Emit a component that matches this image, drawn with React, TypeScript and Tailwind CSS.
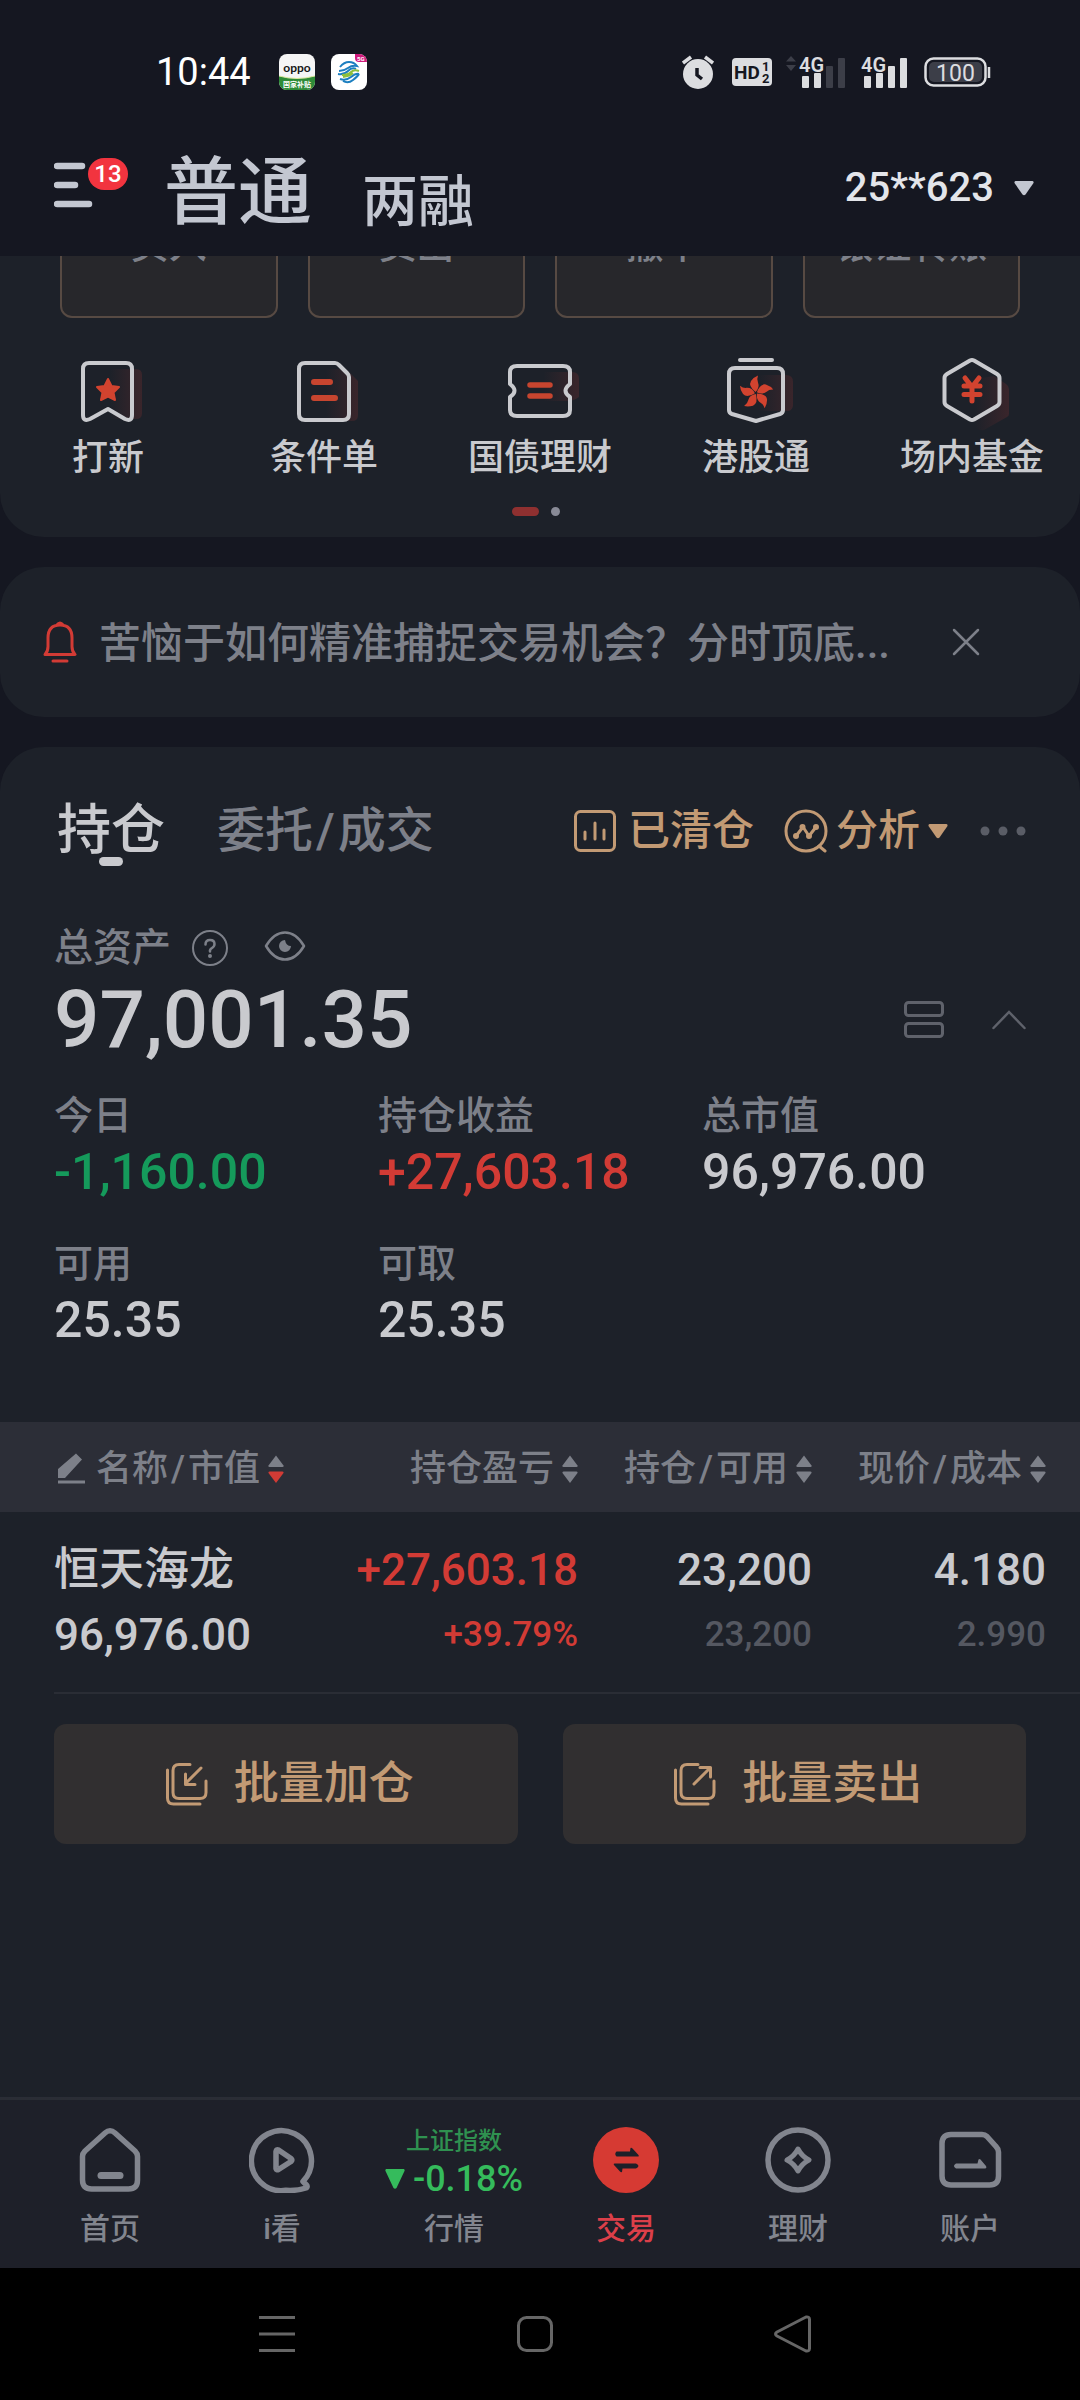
import type { ReactNode } from 'react'

const actions = ['买入', '卖出', '撤单', '银证转账']

const stats = [
  { label: '今日', value: '-1,160.00', tone: 'text-[#159a5b]' },
  { label: '持仓收益', value: '+27,603.18', tone: 'text-[#d23b35]' },
  { label: '总市值', value: '96,976.00', tone: 'text-[#c9cace]' },
  { label: '可用', value: '25.35', tone: 'text-[#c9cace]' },
  { label: '可取', value: '25.35', tone: 'text-[#c9cace]' },
]

/* ---------- status bar ---------- */

function SignalIcon({ bars, data }: { bars: number; data?: boolean }) {
  const heights = [12, 15, 22, 30]
  return (
    <svg width="62" height="34" viewBox="0 0 62 34" fill="#dcdde0">
      {data && <path d="M2 6.500l5-5.500 5 5.500zM2 10h10l-5 6z" fill="#3c3e48" />}
      <text x="15" y="17" fontSize="20" fontWeight="600">4G</text>
      {heights.map((h, i) => (
        <rect key={h} x={18 + i * 12} y={33 - h} width="7" height={h} rx="1" fill={i < bars ? '#dcdde0' : '#3c3e48'} />
      ))}
    </svg>
  )
}

function StatusBar() {
  return (
    <div className="flex h-[144px] items-center pl-[156px] pr-[88px] text-white">
      <span className="text-[38px] leading-10">10:44</span>
      <div className="ml-7 flex gap-4">
        <svg width="36" height="36" viewBox="0 0 36 36">
          <clipPath id="oppoClip"><rect width="36" height="36" rx="8" /></clipPath>
          <g clipPath="url(#oppoClip)">
            <rect width="36" height="36" fill="#f5f5f5" />
            <path d="M0 22q18 5 36 0v14H0z" fill="#2e8b37" />
            <path d="M0 22q18 5 36 0" fill="none" stroke="#d8e59b" />
            <text x="18" y="18" fontSize="12" fontWeight="700" fontFamily="Lato" textAnchor="middle" fill="#151515">oppo</text>
            <text x="18" y="33" fontSize="7" fontWeight="700" textAnchor="middle" fill="#fff">国家补贴</text>
          </g>
        </svg>
        <svg width="36" height="36" viewBox="0 0 36 36">
          <clipPath id="cmClip"><rect width="36" height="36" rx="8" /></clipPath>
          <g clipPath="url(#cmClip)">
            <rect width="36" height="36" fill="#fff" />
            <path d="M24 0h12v8H28q-4 0-4-4z" fill="#cf1a7c" />
            <text x="26" y="7" fontSize="6" fontWeight="700" fill="#fff">5G</text>
            <g fill="none" strokeWidth="2">
              <path d="M9 13q4-5 9-5 5 0 8 4-5-1-9 2t-9 3" stroke="#1c7fc0" />
              <path d="M7 20q6 1 10-3t8-2" stroke="#1c7fc0" />
              <path d="M11 21q6 0 9-3t8-1M12 23q7-1 10-4" stroke="#8dbf3c" />
              <path d="M9 25q6 2 11-2t8-3M12 27q5 3 10-1t6-6" stroke="#1c7fc0" />
            </g>
          </g>
        </svg>
      </div>

      <div className="ml-auto flex items-center">
        <svg width="32" height="34" viewBox="0 0 32 34">
          <circle cx="16" cy="19" r="15" fill="#dcdde0" />
          <path d="M1 8l8-6M31 8l-8-6" stroke="#dcdde0" strokeWidth="3.500" />
          <path d="M15 13v7l5 4" fill="none" stroke="#151721" strokeWidth="3.500" />
        </svg>
        <svg className="ml-[18px]" width="40" height="28" viewBox="0 0 40 28">
          <rect width="40" height="28" rx="4" fill="#dcdde0" />
          <g fill="#151721" fontWeight="700">
            <text x="2" y="21" fontSize="19" fontFamily="Roboto">HD</text>
            <text x="30" y="13" fontSize="13">1</text>
            <text x="30" y="25" fontSize="13">2</text>
          </g>
        </svg>
        <div className="ml-3"><SignalIcon bars={2} data /></div>
        <SignalIcon bars={4} />
        <svg className="ml-4" width="68" height="32" viewBox="0 0 68 32">
          <rect x="1.500" y="2.500" width="60" height="27" rx="8" fill="none" stroke="#dcdde0" strokeWidth="2.500" />
          <rect x="5" y="6" width="53" height="20" rx="5" fill="#3c3e48" />
          <path d="M65 11v11" stroke="#dcdde0" strokeWidth="2.500" />
          <text x="31.500" y="24.500" fontSize="23" textAnchor="middle" fill="#dcdde0">100</text>
        </svg>
      </div>
    </div>
  )
}

/* ---------- shared bits ---------- */

function Caret({ className }: { className: string }) {
  return (
    <svg className={className} width="20" height="15" viewBox="0 0 20 15" fill="currentColor">
      <path d="M1.500 0h17q1.500 0.500 1 2l-8 11.500q-1.500 1.500-3 0L0.500 2q-0.500-1.500 1-2z" />
    </svg>
  )
}

function Pair({ first, second }: { first: string; second: string }) {
  return (
    <span>
      {first}
      <span className="mx-[3px]">/</span>
      {second}
    </span>
  )
}

function SortIcon({ desc }: { desc?: boolean }) {
  return (
    <svg width="16" height="28" viewBox="0 0 16 28">
      <path d="M8 0.500l7.500 10q0.500 1.500-1 1.500h-13q-1.500 0-1-1.500z" fill="#7d8089" />
      <path d="M8 28l7.500-10q0.500-1.500-1-1.500h-13q-1.500 0-1 1.500z" fill={desc ? '#d23b35' : '#7d8089'} />
    </svg>
  )
}

/* ---------- quick entries ---------- */

function EntryIcon({ shadow, outline, children }: { shadow: string; outline: string; children: ReactNode }) {
  return (
    <svg className="overflow-visible" width="72" height="72" viewBox="0 0 72 72" fill="none">
      <defs>
        <linearGradient id="entryShade" x1="0.300" y1="0" x2="1" y2="0">
          <stop offset="0" stopColor="#d23b35" stopOpacity="0" />
          <stop offset="1" stopColor="#d23b35" stopOpacity="0.160" />
        </linearGradient>
      </defs>
      <path d={shadow} fill="url(#entryShade)" />
      <path d={outline} stroke="#c9cace" strokeWidth="4" strokeLinejoin="round" strokeLinecap="round" />
      {children}
    </svg>
  )
}

const entries = [
  {
    label: '打新',
    icon: (
      <EntryIcon
        shadow="M24 14h40q6 0 6 6v38q0 6-6 6H24z"
        outline="M17 8h37q6 0 6 6v46q0 7-7 4L36 54 18 64q-7 3-7-4V14q0-6 6-6z"
      >
        <path d="M36 24l3.500 7 7.500 1-5.500 5.500L43 45l-7-3.500L29 45l1.500-7.500L25 32l7.500-1z" fill="#d2432f" stroke="#d2432f" strokeWidth="2" strokeLinejoin="round" />
      </EntryIcon>
    ),
  },
  {
    label: '条件单',
    icon: (
      <EntryIcon
        shadow="M24 14h34l12 12v34q0 6-6 6H24z"
        outline="M17 8h30q2 0 4 2l8 8q2 2 2 4v37q0 6-6 6H17q-6 0-6-6V14q0-6 6-6z"
      >
        <path d="M26 27h16M26 43h21" stroke="#c7452f" strokeWidth="6" strokeLinecap="round" />
      </EntryIcon>
    ),
  },
  {
    label: '国债理财',
    icon: (
      <EntryIcon
        shadow="M24 17h44q7 0 7 7v18q-5 4-12 4H24z"
        outline="M13 11h46q7 0 7 6v12q-9 7 0 13v13q0 6-7 6H13q-7 0-7-6V42q9-6 0-13V17q0-6 7-6z"
      >
        <path d="M26 30h20M26 41h20" stroke="#c7452f" strokeWidth="5.500" strokeLinecap="round" />
      </EntryIcon>
    ),
  },
  {
    label: '港股通',
    icon: (
      <EntryIcon
        shadow="M24 20h42q7 0 7 7v23q0 4-4 6H24z"
        outline="M20 5h32M15 13h42q6 0 6 6v36q0 3-3 4L36 66 12 59q-3-1-3-4V19q0-6 6-6z"
      >
        <g fill="#d2432f">
          {[0, 72, 144, 216, 288].map((angle) => (
            <path key={angle} transform={`rotate(${angle} 36 38)`} d="M35.500 37Q28 31 31 26q3-4 7-5.500-1.500 4 0 7 2 5-2.500 9.500z" />
          ))}
        </g>
      </EntryIcon>
    ),
  },
  {
    label: '场内基金',
    icon: (
      <EntryIcon
        shadow="M28 26l30-5 12 8q3 2 3 5v25q0 2-2 3L48 75q-3 1-6-1L24 62z"
        outline="M34 5.500q2-1 4 0l23 13.500q2.500 1.500 2.500 4v24q0 2.500-2.500 4L38 64.500q-2 1-4 0L11 51q-2.500-1.500-2.500-4V23q0-2.500 2.500-4z"
      >
        <path d="M29 23l7 9 7-9M28 31h16M28 39.500h16M36 31v15" stroke="#d2432f" strokeWidth="5" strokeLinecap="round" strokeLinejoin="round" />
      </EntryIcon>
    ),
  },
]

/* ---------- holdings table ---------- */

function HeadCell({ children, desc, icon }: { children: ReactNode; desc?: boolean; icon?: ReactNode }) {
  return (
    <th className={icon ? 'pl-14 text-left font-medium' : 'text-right font-medium last:pr-[34px]'}>
      <button className="inline-flex items-center gap-2 whitespace-nowrap align-middle leading-9">
        {icon}
        {children}
        <SortIcon desc={desc} />
      </button>
    </th>
  )
}

function HoldingsTable() {
  return (
    <table className="mt-[77px] w-full table-fixed">
      <colgroup>
        <col />
        <col className="w-[254px]" />
        <col className="w-[234px]" />
        <col className="w-[268px]" />
      </colgroup>
      <thead>
        <tr className="h-[90px] bg-[#2c2e37] text-[36px] text-[#7d8089]">
          <HeadCell
            desc
            icon={
              <svg width="32" height="32" viewBox="0 0 32 32" fill="currentColor">
                <path d="M2 25v-9L20 0.500l6 6L9 25zM2 27.500h27v3H2z" />
              </svg>
            }
          >
            <Pair first="名称" second="市值" />
          </HeadCell>
          <HeadCell>持仓盈亏</HeadCell>
          <HeadCell><Pair first="持仓" second="可用" /></HeadCell>
          <HeadCell><Pair first="现价" second="成本" /></HeadCell>
        </tr>
      </thead>
      <tbody>
        <tr className="whitespace-nowrap text-right text-[44px] font-medium leading-[48px] text-[#c9cace]">
          <td className="pb-[33px] pl-[54px] pt-[34px] text-left">
            <p className="text-[45px]">恒天海龙</p>
            <p className="mt-[17px]">96,976.00</p>
          </td>
          <td className="pb-[33px] pt-[34px] text-[#d23b35]">
            <p>+27,603.18</p>
            <p className="mt-[17px] text-[35px]">+39.79%</p>
          </td>
          <td className="pb-[33px] pt-[34px]">
            <p>23,200</p>
            <p className="mt-[17px] text-[35px] text-[#555861]">23,200</p>
          </td>
          <td className="pb-[33px] pr-[34px] pt-[34px]">
            <p>4.180</p>
            <p className="mt-[17px] text-[35px] text-[#555861]">2.990</p>
          </td>
        </tr>
      </tbody>
    </table>
  )
}

function BatchButton({ label, arrow }: { label: string; arrow: string }) {
  return (
    <button className="flex h-[120px] flex-1 items-center justify-center gap-[26px] rounded-xl bg-[#312f30] pl-2 text-[45px] font-medium leading-[48px] text-[#c29a74]">
      <svg width="42" height="44" viewBox="0 0 42 44" fill="none" stroke="currentColor" strokeWidth="3" strokeLinecap="round" strokeLinejoin="round">
        <path d="M24 2.500H13q-6 0-6 6v22q0 6 6 6h21q6 0 6-6V19" />
        <path d="M1.500 8v28q0 6 6 6H34" />
        <path d={arrow} />
      </svg>
      {label}
    </button>
  )
}

/* ---------- bottom navigation ---------- */

function NavIcon({ children }: { children: ReactNode }) {
  return (
    <svg width="66" height="66" viewBox="0 0 66 66" fill="none" stroke="currentColor" strokeWidth="5.500" strokeLinejoin="round" strokeLinecap="round">
      {children}
    </svg>
  )
}

const navItems = [
  {
    label: '首页',
    icon: (
      <NavIcon>
        <path d="M28 6q5-4.500 10 0l20 18q2.500 2.500 2.500 5.500V53q0 9-9 9h-37q-9 0-9-9V29.500q0-3 2.500-5.500z" />
        <path d="M24 48.500h19" strokeWidth="7" />
      </NavIcon>
    ),
  },
  {
    label: 'i看',
    icon: (
      <NavIcon>
        <path d="M54 54.500A30 30 0 1 0 37 63.300Q48 64 57 61q2-1 0.500-3z" />
        <path d="M27 24.500v17q0.500 2 2.500 1L42 34.500q1.500-1.500 0-3L29.500 23q-2-1-2.500 1.500z" />
      </NavIcon>
    ),
  },
  {
    label: '行情',
    icon: (
      <div className="h-[66px] whitespace-nowrap text-center">
        <p className="text-[24px] leading-7 text-[#2f9150]">上证指数</p>
        <p className="flex items-center gap-2 pt-1 text-[36px] leading-[40px] text-[#35bb5c]">
          <svg width="20" height="20" viewBox="0 0 20 20" fill="currentColor">
            <path d="M1 0h18q1 1 0.500 2L11.500 19q-1.500 1.500-3 0L0.500 2Q0 1 1 0z" />
          </svg>
          -0.18%
        </p>
      </div>
    ),
  },
  {
    label: '交易',
    active: true,
    icon: (
      <NavIcon>
        <circle cx="33" cy="33" r="33" fill="#d63a33" stroke="none" />
        <path d="M23.500 24.500H37l0.500-3.500q1-0.500 2 0.500l6 6.500q1 1.500-0.500 1.500H23.500q-2.500-2.500 0-5zM43 41.500H29.500L29 45q-1 0.500-2-0.500L21 38q-1-1.500 0.500-1.500H43q5 2.500 0 5z" fill="#1d2029" stroke="none" />
      </NavIcon>
    ),
  },
  {
    label: '理财',
    icon: (
      <NavIcon>
        <circle cx="33" cy="33" r="30" />
        <path d="M33 22q4 7.500 11 11-7 3.500-11 11-4-7.500-11-11 7-3.500 11-11z" strokeWidth="5" />
      </NavIcon>
    ),
  },
  {
    label: '账户',
    icon: (
      <NavIcon>
        <path d="M14 7.500h31q3 0 5 2l9 10q2.500 2.500 2.500 5.500v24q0 9-9 9H14q-9 0-9-9V16.500q0-9 9-9z" />
        <path d="M19 36.500h21.500l1-4q1-1 2 0l5.500 6.500q1 2.500-1 2.500H19q-4-2.500 0-5z" fill="currentColor" stroke="none" />
      </NavIcon>
    ),
  },
]

export default function App() {
  return (
    <div className="flex min-h-screen flex-col bg-[#151721] font-[Roboto,'Noto_Sans_CJK_SC',sans-serif] text-[#c9cace]">
      <StatusBar />

      <header className="flex h-[112px] items-end pb-[26px] pl-[54px] pr-[46px]">
        <button className="relative mb-[22px]" aria-label="菜单">
          <svg width="40" height="46" viewBox="0 0 40 46" fill="none" stroke="#c3c7d1" strokeWidth="6.500" strokeLinecap="round">
            <path d="M3 4h25M3 23h18M3 42h32" />
          </svg>
          <span className="absolute -top-1 left-[34px] flex h-8 w-10 items-center justify-center rounded-full bg-[#f2343f] text-[24px] font-medium leading-8 text-white">13</span>
        </button>
        <nav className="ml-[70px] flex items-end gap-[50px] whitespace-nowrap text-[#c3c7d1]">
          <button className="text-[74px] font-medium leading-[74px]">普通</button>
          <button className="text-[56px] font-medium leading-[56px]">两融</button>
        </nav>
        <button className="mb-[22px] ml-auto flex items-center gap-5 text-[40px] font-medium leading-10 text-[#e3e5ea]">
          25**623
          <Caret className="text-[#c3c7d1]" />
        </button>
      </header>

      <main className="flex flex-1 flex-col gap-[30px]">
        <section className="rounded-b-[44px] bg-[#1d2129]">
          {/* trade actions, scrolled partly under the header */}
          <div className="flex h-[62px] items-end gap-[30px] overflow-hidden px-[60px]">
            {actions.map((action) => (
              <button
                key={action}
                className="h-[146px] flex-1 rounded-xl border-2 border-[#574a43] bg-[#27272b] text-[38px] font-medium text-[#7d8089]"
              >
                {action}
              </button>
            ))}
          </div>

          <div className="grid grid-cols-5 pt-[37px]">
            {entries.map((entry) => (
              <a key={entry.label} href="#" className="flex flex-col items-center gap-[13px] text-[36px] font-medium leading-9">
                {entry.icon}
                {entry.label}
              </a>
            ))}
          </div>

          <div className="flex justify-center gap-3 pb-[21px] pr-2 pt-[31px]">
            <span className="h-[9px] w-[27px] rounded-full bg-[#8f3030]" />
            <span className="size-[9px] rounded-full bg-[#888a96]" />
          </div>
        </section>

        <section className="flex h-[150px] items-center rounded-[44px] bg-[#1d2129] pl-[43px] pr-[100px]">
          <svg width="34" height="42" viewBox="0 0 34 42" fill="none" stroke="#d23b35" strokeWidth="3" strokeLinejoin="round" strokeLinecap="round">
            <path d="M14 4q3-4 6 0M2 33.500q3-3 3-8V17Q5 4 17 4t12 13v8.500q0 5 3 8z" />
            <path d="M10 40h14" />
          </svg>
          <p className="ml-[22px] flex-1 truncate pt-1 text-[42px] font-medium leading-[48px] text-[#7d8089]">苦恼于如何精准捕捉交易机会？分时顶底...</p>
          <button aria-label="关闭">
            <svg width="28" height="28" viewBox="0 0 28 28" stroke="#7d8089" strokeWidth="2.500" strokeLinecap="round">
              <path d="M2 2l24 24M26 2L2 26" />
            </svg>
          </button>
        </section>

        <section className="flex-1 rounded-t-[44px] bg-[#1d2129] pb-16">
          <div className="ml-[57px] mr-[54px] mt-[58px] flex h-[52px] items-center">
            <button className="relative text-[54px] font-medium leading-[54px]">
              持仓
              <span className="absolute -bottom-2 left-1/2 h-[9px] w-6 -translate-x-1/2 rounded-full bg-[#c9cace]" />
            </button>
            <button className="ml-[52px] text-[48px] font-medium leading-[54px] text-[#7d8089]">
              <Pair first="委托" second="成交" />
            </button>
            <div className="ml-auto flex items-center text-[42px] leading-[48px] text-[#c29a74]">
              <button className="flex items-center gap-3 font-medium">
                <svg width="42" height="42" viewBox="0 0 42 42" fill="none" stroke="currentColor" strokeWidth="3" strokeLinecap="round">
                  <rect x="1.500" y="1.500" width="39" height="39" rx="5" />
                  <path d="M11 22v7M21 13v16M30 20v9" />
                </svg>
                已清仓
              </button>
              <button className="ml-[30px] flex items-center gap-2 font-medium">
                <svg width="44" height="44" viewBox="0 0 44 44" fill="none" stroke="currentColor" strokeWidth="3" strokeLinecap="round" strokeLinejoin="round">
                  <circle cx="22" cy="22" r="20" />
                  <path d="M35 37l6 5M12 27l7-9 6 9 7-9" />
                  <g fill="currentColor" strokeWidth="2">
                    <circle cx="12" cy="27" r="2" />
                    <circle cx="18.500" cy="18" r="2" />
                    <circle cx="25" cy="27" r="2" />
                    <circle cx="32" cy="18" r="2" />
                  </g>
                </svg>
                分析
                <Caret className="text-[#c29a74]" />
              </button>
              <button className="ml-8" aria-label="更多">
                <svg width="46" height="10" viewBox="0 0 46 10" fill="#5a5d66">
                  <circle cx="5" cy="5" r="4.500" />
                  <circle cx="23" cy="5" r="4.500" />
                  <circle cx="41" cy="5" r="4.500" />
                </svg>
              </button>
            </div>
          </div>

          <div className="mx-[54px] mt-[71px]">
            <div className="flex h-10 items-center text-[#7d8089]">
              <span className="text-[39px] font-medium leading-10">总资产</span>
              <button className="ml-[21px]" aria-label="说明">
                <svg width="36" height="36" viewBox="0 0 36 36" fill="none" stroke="currentColor" strokeWidth="2" strokeLinecap="round">
                  <circle cx="18" cy="18" r="17" />
                  <path d="M13.500 14.500q0-4.500 4.500-4.500t4.500 4q0 2.500-2.500 4t-2 3.500" strokeWidth="2.500" />
                  <circle cx="18" cy="26" r="1" fill="currentColor" />
                </svg>
              </button>
              <button className="ml-9 pb-1" aria-label="隐藏金额">
                <svg width="42" height="30" viewBox="0 0 42 30" fill="none" stroke="currentColor" strokeWidth="2.500">
                  <path d="M2 15Q10 1.500 21 1.500T40 15Q32 28.500 21 28.500T2 15z" strokeLinejoin="round" />
                  <path d="M21 9a6 6 0 1 0 6 6q-5 0-6-6z" fill="currentColor" stroke="none" />
                </svg>
              </button>
            </div>
            <div className="mt-3 flex h-20 items-center">
              <strong className="text-[80px] font-medium leading-[80px]">97,001.35</strong>
              <button className="ml-auto" aria-label="切换布局">
                <svg width="40" height="38" viewBox="0 0 40 38" fill="none" stroke="#5f626b" strokeWidth="3">
                  <rect x="1.500" y="1.500" width="37" height="13" rx="3" />
                  <rect x="1.500" y="22.500" width="37" height="13" rx="3" />
                </svg>
              </button>
              <button className="ml-12" aria-label="收起">
                <svg width="34" height="20" viewBox="0 0 34 20" fill="none" stroke="#5f626b" strokeWidth="2.500" strokeLinecap="round">
                  <path d="M1.500 18L17 2l15.500 16" />
                </svg>
              </button>
            </div>

            <dl className="mt-9 grid grid-cols-3 gap-y-[47px] font-medium">
              {stats.map((stat) => (
                <div key={stat.label}>
                  <dt className="text-[39px] leading-10 text-[#7d8089]">{stat.label}</dt>
                  <dd className={`mt-[11px] text-[50px] leading-[50px] ${stat.tone}`}>{stat.value}</dd>
                </div>
              ))}
            </dl>
          </div>

          <HoldingsTable />
          <div className="ml-[54px] h-[2px] bg-[#2a2d35]" />

          <div className="mx-[54px] mt-[30px] flex gap-[45px]">
            <BatchButton label="批量加仓" arrow="M35 6L20 21M19.500 12v10.500H29" />
            <BatchButton label="批量卖出" arrow="M20 22L36 6M26 5.500h10.500V15" />
          </div>
        </section>
      </main>

      <nav className="grid grid-cols-6 border-t-[3px] border-[#2a2d35] bg-[#1e2029] px-6 pb-6 pt-[27px]">
        {navItems.map((item) => (
          <a
            key={item.label}
            href="#"
            className={`flex flex-col items-center gap-[21px] text-[30px] font-medium leading-[30px] ${item.active ? 'text-[#dc3f49]' : 'text-[#82858e]'}`}
          >
            {item.icon}
            {item.label}
          </a>
        ))}
      </nav>

      {/* Android system keys */}
      <div className="flex h-[132px] items-center justify-center gap-[220px] bg-black pr-[10px]">
        <button aria-label="最近任务">
          <svg width="38" height="38" viewBox="0 0 38 38" stroke="#666" strokeWidth="3">
            <path d="M1 2.500h36M1 19h36M1 35.500h36" />
          </svg>
        </button>
        <button aria-label="主屏幕">
          <svg width="38" height="38" viewBox="0 0 38 38" fill="none" stroke="#666" strokeWidth="3">
            <rect x="2.500" y="2.500" width="33" height="33" rx="8" />
          </svg>
        </button>
        <button aria-label="返回">
          <svg width="38" height="38" viewBox="0 0 38 38" fill="none" stroke="#666" strokeWidth="3" strokeLinejoin="round">
            <path d="M3 17L32 2q3.500-0.500 3.500 2.500v29q0 3-3.500 2.500L3 21q-3-2 0-4z" />
          </svg>
        </button>
      </div>
    </div>
  )
}
